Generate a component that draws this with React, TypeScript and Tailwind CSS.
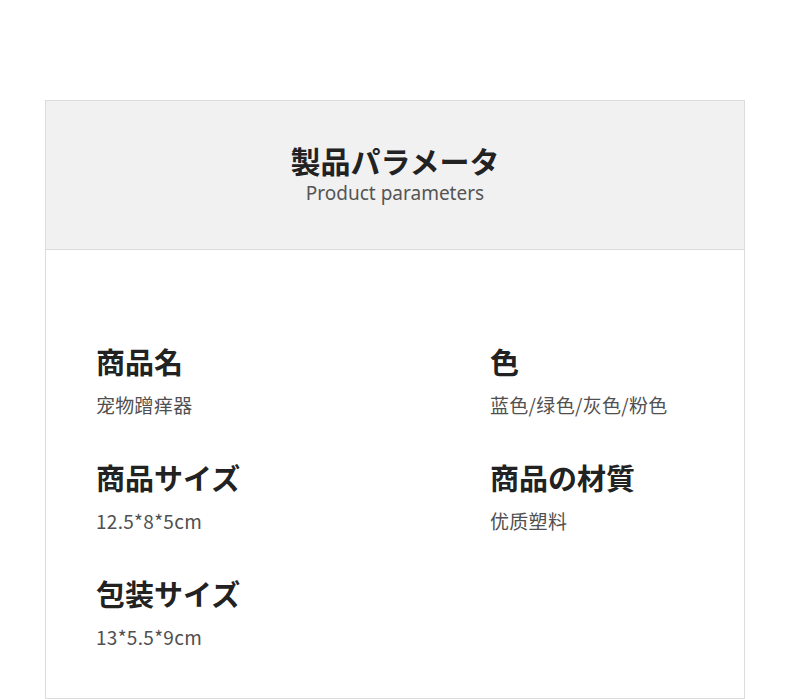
const params = [
  { label: '商品名', value: '宠物蹭痒器' },
  { label: '色', value: '蓝色/绿色/灰色/粉色' },
  { label: '商品サイズ', value: '12.5*8*5cm' },
  { label: '商品の材質', value: '优质塑料' },
  { label: '包装サイズ', value: '13*5.5*9cm' },
];

export default function App() {
  return (
    <div
      className="min-h-[699px] bg-white pt-[100px] pl-[45px]"
      style={{ fontFamily: '"Noto Sans CJK JP", "Noto Sans", sans-serif' }}
    >
      <div className="w-[700px] h-[599px] border border-[#dcdcdc]">
        <div className="h-[149px] bg-[#f1f1f1] border-b border-[#dcdcdc] flex flex-col items-center pt-[39px]">
          <h2 className="text-[30px] leading-[40px] font-bold text-[#222]">製品パラメータ</h2>
          <p
            className="text-[19px] leading-[26px] text-[#555]"
            style={{ fontFamily: '"Noto Sans", sans-serif' }}
          >
            Product parameters
          </p>
        </div>
        <div className="grid grid-cols-2 pl-[50px] pt-[91px] gap-y-[38px]">
          {params.map((p, i) => (
            <div key={i} className={i % 2 === 1 ? 'pl-[70px]' : ''}>
              <div className="text-[29px] leading-[40px] font-bold text-[#222]">{p.label}</div>
              <div
                className="mt-[10px] text-[19px] leading-[28px] text-[#505050] tracking-[0.3px]"
                style={{ fontFamily: '"Noto Sans CJK SC", sans-serif' }}
              >
                {p.value}
              </div>
            </div>
          ))}
        </div>
      </div>
    </div>
  );
}
